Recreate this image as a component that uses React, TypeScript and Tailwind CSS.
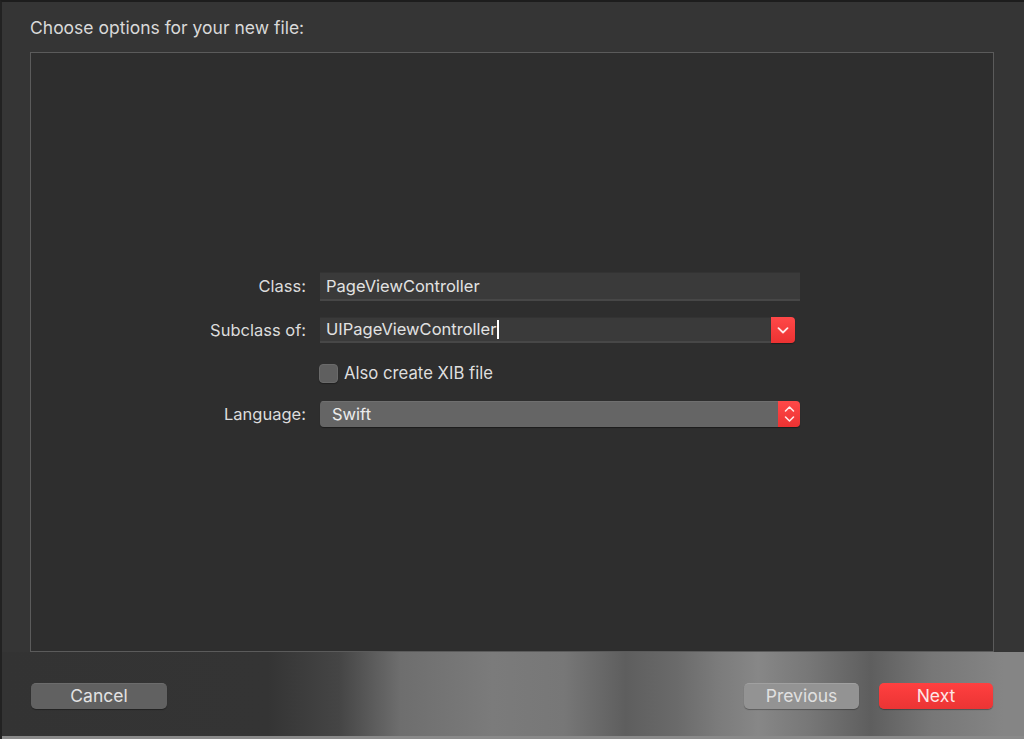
import React from "react";

const font = { fontFamily: "Inter, 'Noto Sans', sans-serif" };

function ChevronDown() {
  return (
    <svg width="12" height="7" viewBox="0 0 12 7" fill="none">
      <path d="M1.5 1.2l4.5 4.3 4.5-4.3" stroke="#ffe9e9" strokeWidth="1.8" strokeLinecap="round" strokeLinejoin="round" />
    </svg>
  );
}

function UpDown() {
  return (
    <svg width="11" height="18" viewBox="0 0 11 18" fill="none">
      <path d="M1.5 6L5.5 2l4 4" stroke="#ffe9e9" strokeWidth="1.6" strokeLinecap="round" strokeLinejoin="round" />
      <path d="M1.5 12l4 4 4-4" stroke="#ffe9e9" strokeWidth="1.6" strokeLinecap="round" strokeLinejoin="round" />
    </svg>
  );
}

export default function App() {
  return (
    <div
      className="w-[1024px] h-[739px] overflow-hidden bg-[#353535] border-t-2 border-l-2 border-t-[#1d1d1d] border-l-[#222] flex flex-col text-[#dcdcdc]"
      style={font}
    >
      {/* title */}
      <div className="h-[50px] pl-[28px] pt-[15px] text-[17.5px] leading-[22px] text-[#d9d9d9]">
        Choose options for your new file:
      </div>

      {/* options panel */}
      <div className="ml-[28px] w-[964px] h-[600px] border border-[#5b5b5b] bg-[#2e2e2e] pt-[219px] flex flex-col">
        {/* Class */}
        <div className="flex items-center">
          <div className="w-[276px] text-right text-[16.5px] pr-[1px]">Class:</div>
          <div className="ml-[13px] w-[480px] h-[29px] bg-[#3a3a3a] border-t border-t-[#333] border-b-2 border-b-[#474747] flex items-center pl-[6px] text-[16.5px] text-[#e2e2e2]">
            PageViewController
          </div>
        </div>

        {/* Subclass */}
        <div className="flex items-center mt-[16px]">
          <div className="w-[276px] text-right text-[16.5px] pr-[1px]">Subclass of:</div>
          <div className="ml-[13px] w-[475px] h-[26px] flex">
            <div className="flex-1 bg-[#3a3a3a] border-t border-t-[#333] border-b-2 border-b-[#474747] flex items-center pl-[6px] text-[16.5px] text-[#e2e2e2]">
              UIPageViewController
              <span className="inline-block w-[1.5px] h-[19px] bg-white ml-[1px]" />
            </div>
            <div className="w-[24px] bg-[linear-gradient(180deg,#ff4848,#ec3232)] rounded-r-[4px] flex items-center justify-center shadow-[0_1px_1px_rgba(0,0,0,0.35)]">
              <ChevronDown />
            </div>
          </div>
        </div>

        {/* Checkbox */}
        <div className="flex items-center h-[19px] mt-[21px]">
          <div className="w-[276px]" />
          <div className="ml-[12px] w-[19px] h-[19px] rounded-[4px] bg-[#5f5f5f] border border-[#6a6a6a] shadow-[0_1px_1px_rgba(0,0,0,0.3)]" />
          <div className="ml-[6px] text-[16.7px] leading-[19px] text-[#dedede]">Also create XIB file</div>
        </div>

        {/* Language */}
        <div className="flex items-center mt-[18px]">
          <div className="w-[276px] text-right text-[16.5px] pr-[1px]">Language:</div>
          <div className="ml-[13px] w-[480px] h-[26px] flex rounded-[4px] overflow-hidden shadow-[0_1px_1px_rgba(0,0,0,0.4)]">
            <div className="flex-1 bg-[#656565] border-t border-t-[#6f6f6f] flex items-center pl-[12px] text-[16.5px] text-[#ececec]">
              Swift
            </div>
            <div className="w-[22px] bg-[linear-gradient(180deg,#ff4848,#ec3232)] flex items-center justify-center">
              <UpDown />
            </div>
          </div>
        </div>
      </div>

      {/* footer */}
      <div className="flex-1 flex items-start pt-[31px] pl-[29px] pr-[31px] border-b-[3px] border-b-[#8a8a8a] bg-[linear-gradient(90deg,#333_0%,#343434_26%,#454545_33%,#6e6e6e_39%,#7b7b7b_48%,#777_55%,#5e5e5e_61%,#6a6a6a_66%,#7b7b7b_70%,#878787_74%,#777_79%,#5e5e5e_85%,#777_91%,#858585_98%)]">
        <button className="w-[136px] h-[26px] rounded-[5px] bg-[#616161] border-t border-t-[#6c6c6c] shadow-[0_1px_1px_rgba(0,0,0,0.35)] text-[17.5px] text-[#e3e3e3] flex items-center justify-center">
          Cancel
        </button>
        <div className="flex-1" />
        <button className="w-[115px] h-[26px] rounded-[5px] bg-[#939393] border-t border-t-[#a0a0a0] shadow-[0_1px_1px_rgba(0,0,0,0.3)] text-[17.5px] text-[#e0e0e0] flex items-center justify-center">
          Previous
        </button>
        <button className="ml-[20px] w-[114px] h-[26px] rounded-[5px] bg-[linear-gradient(180deg,#ff4040,#eb3434)] shadow-[0_1px_1px_rgba(0,0,0,0.35)] text-[17.5px] text-[#fde6e6] flex items-center justify-center">
          Next
        </button>
      </div>
    </div>
  );
}
